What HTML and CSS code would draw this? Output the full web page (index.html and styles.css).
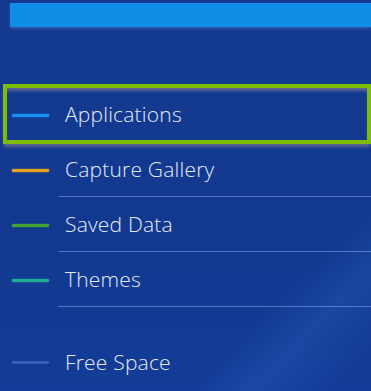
FILE: index.html
```html
<!DOCTYPE html>
<html lang="en">
<head>
    <meta charset="UTF-8">
    <meta name="viewport" content="width=device-width, initial-scale=1.0">
    <title>Library</title>
    <link rel="stylesheet" href="styles.css">
</head>
<body>
    <div class="topbar"></div>

    <ul class="menu">
        <li class="item selected">
            <span class="dash apps"></span>
            <span class="label">Applications</span>
        </li>
        <li class="item">
            <span class="dash capture"></span>
            <span class="label">Capture Gallery</span>
        </li>
        <li class="item">
            <span class="dash saved"></span>
            <span class="label">Saved Data</span>
        </li>
        <li class="item">
            <span class="dash themes"></span>
            <span class="label">Themes</span>
        </li>
        <li class="item free">
            <span class="dash space"></span>
            <span class="label">Free Space</span>
        </li>
    </ul>
</body>
</html>
```

FILE: styles.css
```css
html, body {
    height: 100%;
}
body {
    margin: 0;
    overflow: hidden;
    font-family: "Open Sans", "Liberation Sans", sans-serif;
    font-weight: 300;
    color: #e6ecf8;
    background:
        linear-gradient(135deg, transparent 76%, rgba(40, 95, 185, 0.35) 84%, transparent 95%),
        linear-gradient(180deg, #143a90 0%, #12398f 60%, #133c98 100%);
}
.topbar {
    margin: 3px 0 0 10px;
    height: 24px;
    background: #118de8;
    box-shadow: 0 2px 2px rgba(60, 110, 190, 0.6);
}
.menu {
    list-style: none;
    margin: 60px 0 0;
    padding: 0;
}
.item {
    position: relative;
    display: flex;
    align-items: center;
    height: 55px;
    padding-left: 12px;
}
.item.free {
    margin-top: 27px;
}
/* focus frame drawn over the selected row */
.item.selected::after {
    content: "";
    position: absolute;
    top: -3px;
    bottom: -2px;
    left: 3px;
    right: 0;
    border: 4px solid #7dbd0a;
    box-shadow: inset 0 4px 3px -1px rgba(140, 130, 150, 0.6), 0 4px 3px -1px rgba(140, 130, 150, 0.6);
}
.dash {
    width: 37px;
    height: 3px;
    margin-top: 2px;
    border-radius: 1px;
}
.dash.apps {
    background: #1790f0;
    box-shadow: 0 0 2px rgba(23, 144, 240, 0.8);
}
.dash.capture {
    background: #e9a21d;
    box-shadow: 0 0 2px rgba(233, 162, 29, 0.7);
}
.dash.saved {
    background: #44a334;
    box-shadow: 0 0 2px rgba(68, 163, 52, 0.7);
}
.dash.themes {
    background: #1fae96;
    box-shadow: 0 0 2px rgba(31, 174, 150, 0.7);
}
.dash.space {
    background: #3a5cb6;
}
.label {
    flex: 1;
    align-self: stretch;
    display: flex;
    align-items: center;
    margin-left: 9px;
    padding-left: 7px;
    font-size: 21px;
    letter-spacing: 0.2px;
    border-bottom: 1px solid rgba(125, 155, 225, 0.6);
}
.item.free .label {
    border-bottom: none;
}
```
